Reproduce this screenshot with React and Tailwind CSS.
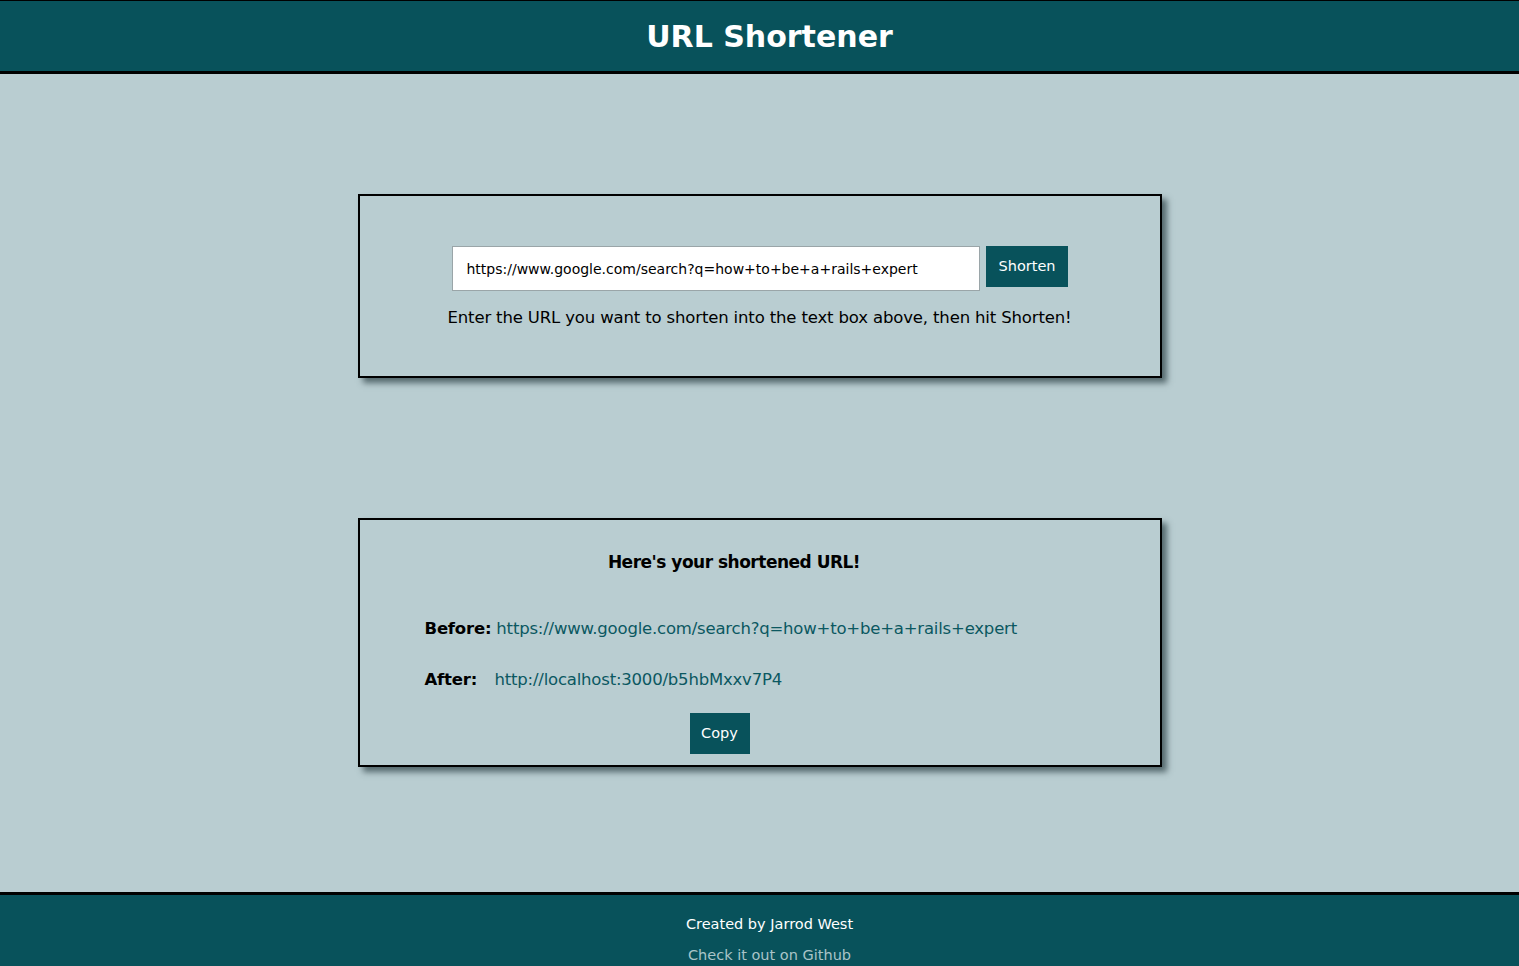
import React from 'react';

const font = { fontFamily: '"DejaVu Sans", Verdana, sans-serif' };

export default function App() {
  return (
    <div className="min-h-screen bg-[#b9cdd1] flex flex-col text-black" style={font}>
      <header className="bg-[#08525b] border-t border-black border-b-[3px] h-[74px] flex items-center justify-center pl-[20px]">
        <h1 className="text-[30px] font-bold text-white">URL Shortener</h1>
      </header>

      <main className="flex flex-col items-center">
        <div className="mt-[120px] w-[804px] h-[184px] border-2 border-black shadow-[5px_5px_6px_rgba(60,80,85,0.8)] flex flex-col items-center pt-[50px]">
          <div className="flex items-start gap-[6px] ml-[1px]">
            <input
              readOnly
              value="https://www.google.com/search?q=how+to+be+a+rails+expert"
              className="w-[528px] h-[45px] bg-white border border-[#9aa5a8] px-[13px] text-[14px] text-black outline-none"
            />
            <button className="h-[41px] px-[12px] bg-[#08525b] text-white text-[14.5px]">Shorten</button>
          </div>
          <p className="mt-[15px] text-[16.5px] tracking-[-0.15px]">Enter the URL you want to shorten into the text box above, then hit Shorten!</p>
        </div>

        <div className="mt-[140px] w-[804px] h-[249px] border-2 border-black shadow-[5px_5px_6px_rgba(60,80,85,0.8)] flex flex-col">
          <h2 className="mt-[30px] ml-[-51px] text-center text-[17px] font-bold tracking-[-0.5px]">Here's your shortened URL!</h2>
          <div className="mt-[41px] ml-[65px] flex flex-col gap-[27px] text-[16.5px] tracking-[-0.2px]">
            <p><span className="font-bold">Before:</span> <a className="text-[#0b5861]">https://www.google.com/search?q=how+to+be+a+rails+expert</a></p>
            <p><span className="font-bold inline-block w-[70px]">After:</span><a className="text-[#0b5861]">http://localhost:3000/b5hbMxxv7P4</a></p>
          </div>
          <button className="mt-[20px] self-start ml-[330px] w-[60px] h-[41px] bg-[#08525b] text-white text-[14.5px]">Copy</button>
        </div>
      </main>

      <footer className="mt-[125px] bg-[#08525b] border-t-[3px] border-black flex flex-col items-center pl-[20px] pt-[19px] pb-[8px] gap-[9px] text-[14.5px]">
        <p className="text-white">Created by Jarrod West</p>
        <a className="text-[#a9c4c8]">Check it out on Github</a>
      </footer>
    </div>
  );
}
